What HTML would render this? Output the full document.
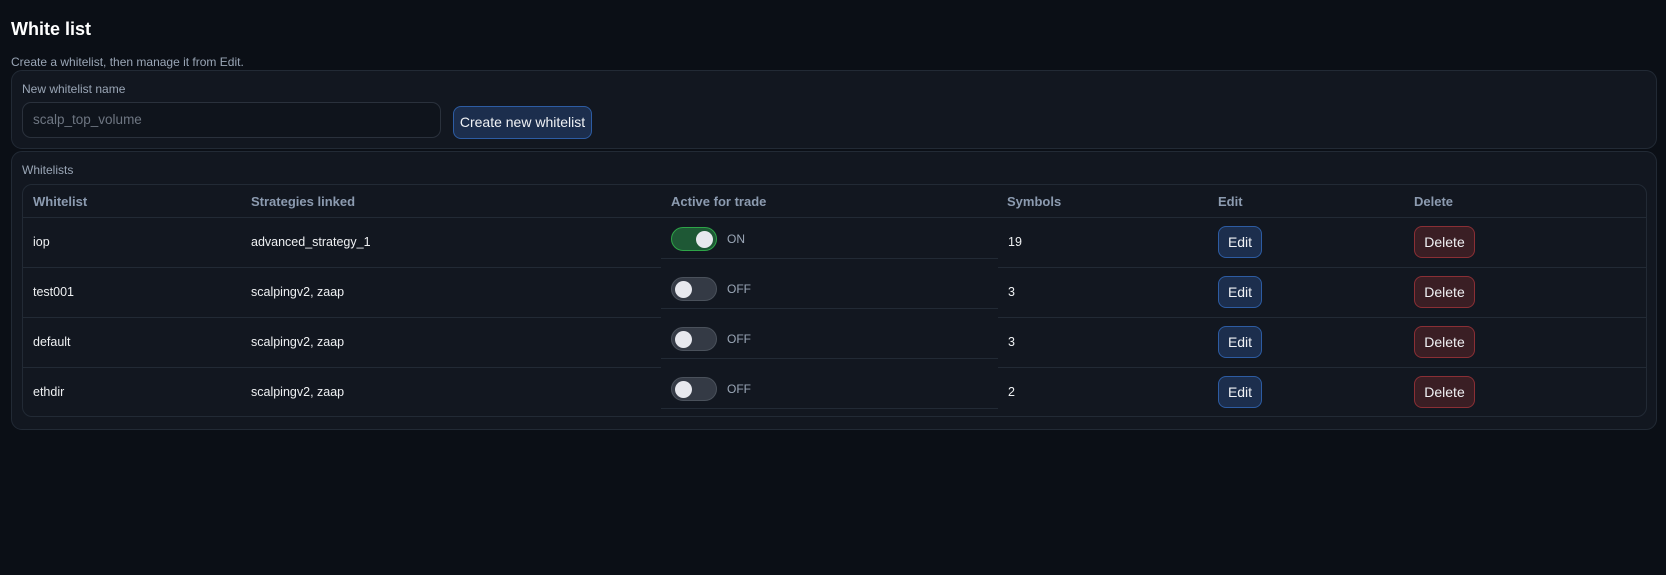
<!DOCTYPE html>
<html><head><meta charset="utf-8"><style>
*{box-sizing:border-box;margin:0;padding:0}
body{width:1666px;height:575px;background:#0b0f16;font-family:"Liberation Sans",sans-serif;color:#e6e8eb;position:relative;overflow:hidden}
.abs{position:absolute}
h1{position:absolute;left:11px;top:19px;font-size:18px;font-weight:bold;color:#fff}
.sub{left:11px;top:55px;font-size:12px;color:#9aa6b6}
.card{position:absolute;left:11px;right:9px;background:#121720;border:1px solid #222a35;border-radius:11px}
.lbl{font-size:12px;color:#9aa6b6}
.input{left:22px;top:102px;width:419px;height:36px;border:1px solid #2a313c;border-radius:9px;background:#0f141c;color:#6e7682;font-size:13.5px;padding:9px 10px}
.btn{position:absolute;border-radius:8px;font-size:14px;color:#f0f2f5;text-align:center}
.blue{background:#1c2e4d;border:1px solid #2d5ca3}
.red{background:#3a1e24;border:1px solid #8a2f35}
.table{left:22px;top:184px;width:1625px;height:233px;border:1px solid #222a35;border-radius:10px}
.hline{position:absolute;height:1px;background:#222a35}
.th{position:absolute;top:194px;font-size:13px;font-weight:bold;color:#8c9bb0}
.td{position:absolute;font-size:12.5px;color:#eef0f2}
.tg{position:absolute;left:671px;width:46px;height:24px;border-radius:12px}
.tg.on{background:#1e5835;border:1px solid #2ea448}
.tg.off{background:#343a45;border:1px solid #4a515b}
.tg i{position:absolute;top:3px;width:17px;height:17px;border-radius:50%;background:#e7e8ee}
.tg.on i{right:3px}.tg.off i{left:3px}
.tl{position:absolute;left:727px;font-size:12px;color:#9aa6b6}
</style></head><body>
<h1>White list</h1>
<div class="abs sub">Create a whitelist, then manage it from Edit.</div>
<div class="card" style="top:70px;height:79px"></div>
<div class="abs lbl" style="left:22px;top:82px">New whitelist name</div>
<div class="abs input">scalp_top_volume</div>
<div class="btn blue" style="left:453px;top:106px;width:139px;height:33px;line-height:31px">Create new whitelist</div>
<div class="card" style="top:151px;height:279px"></div>
<div class="abs lbl" style="left:22px;top:163px">Whitelists</div>
<div class="abs table"></div>
<div class="hline" style="left:23px;width:1623px;top:217px"></div>
<div class="hline" style="left:23px;width:638px;top:267px"></div><div class="hline" style="left:998px;width:648px;top:267px"></div>
<div class="hline" style="left:23px;width:638px;top:317px"></div><div class="hline" style="left:998px;width:648px;top:317px"></div>
<div class="hline" style="left:23px;width:638px;top:367px"></div><div class="hline" style="left:998px;width:648px;top:367px"></div>
<div class="hline" style="left:661px;width:337px;top:258px"></div>
<div class="hline" style="left:661px;width:337px;top:308px"></div>
<div class="hline" style="left:661px;width:337px;top:358px"></div>
<div class="hline" style="left:661px;width:337px;top:408px"></div>
<div class="th" style="left:33px">Whitelist</div>
<div class="th" style="left:251px">Strategies linked</div>
<div class="th" style="left:671px">Active for trade</div>
<div class="th" style="left:1007px">Symbols</div>
<div class="th" style="left:1218px">Edit</div>
<div class="th" style="left:1414px">Delete</div>

<div class="td" style="left:33px;top:235px">iop</div>
<div class="td" style="left:251px;top:235px">advanced_strategy_1</div>
<div class="tg on" style="top:227px"><i></i></div><div class="tl" style="top:232px">ON</div>
<div class="td" style="left:1008px;top:235px">19</div>
<div class="btn blue" style="left:1218px;top:226px;width:44px;height:32px;line-height:30px">Edit</div>
<div class="btn red" style="left:1414px;top:226px;width:61px;height:32px;line-height:30px">Delete</div>

<div class="td" style="left:33px;top:285px">test001</div>
<div class="td" style="left:251px;top:285px">scalpingv2, zaap</div>
<div class="tg off" style="top:277px"><i></i></div><div class="tl" style="top:282px">OFF</div>
<div class="td" style="left:1008px;top:285px">3</div>
<div class="btn blue" style="left:1218px;top:276px;width:44px;height:32px;line-height:30px">Edit</div>
<div class="btn red" style="left:1414px;top:276px;width:61px;height:32px;line-height:30px">Delete</div>

<div class="td" style="left:33px;top:335px">default</div>
<div class="td" style="left:251px;top:335px">scalpingv2, zaap</div>
<div class="tg off" style="top:327px"><i></i></div><div class="tl" style="top:332px">OFF</div>
<div class="td" style="left:1008px;top:335px">3</div>
<div class="btn blue" style="left:1218px;top:326px;width:44px;height:32px;line-height:30px">Edit</div>
<div class="btn red" style="left:1414px;top:326px;width:61px;height:32px;line-height:30px">Delete</div>

<div class="td" style="left:33px;top:385px">ethdir</div>
<div class="td" style="left:251px;top:385px">scalpingv2, zaap</div>
<div class="tg off" style="top:377px"><i></i></div><div class="tl" style="top:382px">OFF</div>
<div class="td" style="left:1008px;top:385px">2</div>
<div class="btn blue" style="left:1218px;top:376px;width:44px;height:32px;line-height:30px">Edit</div>
<div class="btn red" style="left:1414px;top:376px;width:61px;height:32px;line-height:30px">Delete</div>
</body></html>
